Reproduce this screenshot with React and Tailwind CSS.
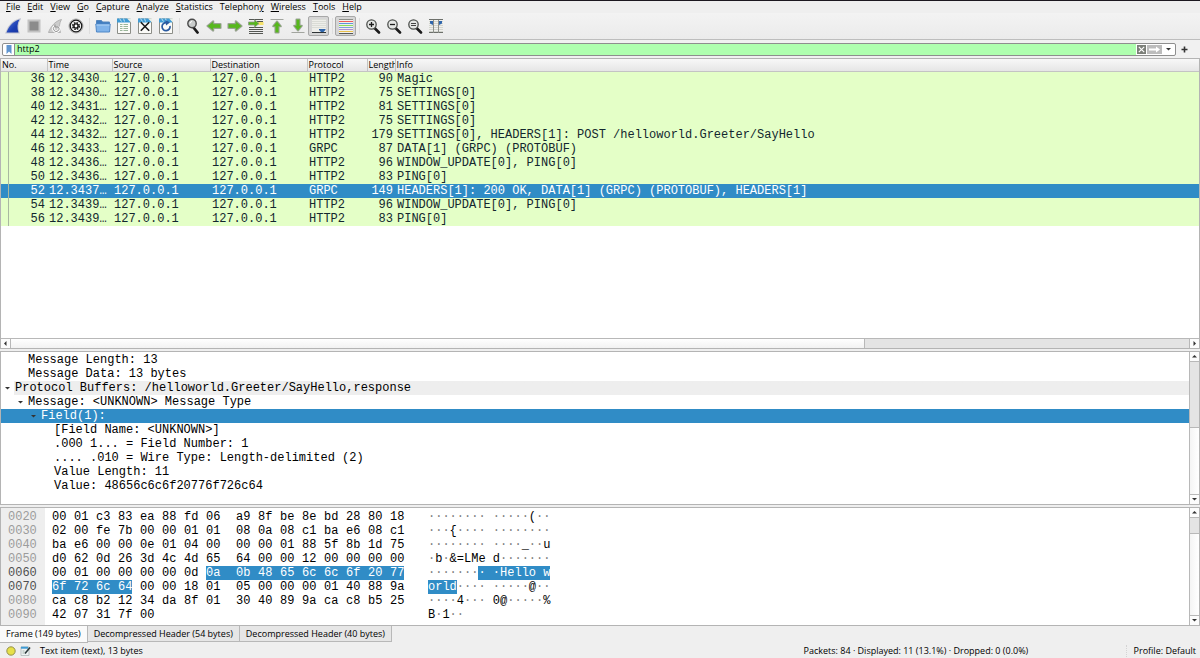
import React, { useState } from 'react';
import clsx from 'clsx';

// menu label split as [before, mnemonic, after]
const MENUS = [
  ['', 'F', 'ile'],
  ['', 'E', 'dit'],
  ['', 'V', 'iew'],
  ['', 'G', 'o'],
  ['', 'C', 'apture'],
  ['', 'A', 'nalyze'],
  ['', 'S', 'tatistics'],
  ['Telephon', 'y', ''],
  ['', 'W', 'ireless'],
  ['', 'T', 'ools'],
  ['', 'H', 'elp'],
];

const PACKETS = [
  [36, '12.3430…', 'HTTP2', 90, 'Magic'],
  [38, '12.3430…', 'HTTP2', 75, 'SETTINGS[0]'],
  [40, '12.3431…', 'HTTP2', 81, 'SETTINGS[0]'],
  [42, '12.3432…', 'HTTP2', 75, 'SETTINGS[0]'],
  [44, '12.3432…', 'HTTP2', 179, 'SETTINGS[0], HEADERS[1]: POST /helloworld.Greeter/SayHello'],
  [46, '12.3433…', 'GRPC', 87, 'DATA[1] (GRPC) (PROTOBUF)'],
  [48, '12.3436…', 'HTTP2', 96, 'WINDOW_UPDATE[0], PING[0]'],
  [50, '12.3436…', 'HTTP2', 83, 'PING[0]'],
  [52, '12.3437…', 'GRPC', 149, 'HEADERS[1]: 200 OK, DATA[1] (GRPC) (PROTOBUF), HEADERS[1]'],
  [54, '12.3439…', 'HTTP2', 96, 'WINDOW_UPDATE[0], PING[0]'],
  [56, '12.3439…', 'HTTP2', 83, 'PING[0]'],
];

const TREE = [
  { pad: 'pl-[14px]', text: 'Message Length: 13' },
  { pad: 'pl-[14px]', text: 'Message Data: 13 bytes' },
  { pad: 'pl-[1px]', text: 'Protocol Buffers: /helloworld.Greeter/SayHello,response', open: true, shaded: true },
  { pad: 'pl-[14px]', text: 'Message: <UNKNOWN> Message Type', open: true },
  { pad: 'pl-[27px]', text: 'Field(1):', open: true, selected: true },
  { pad: 'pl-[40px]', text: '[Field Name: <UNKNOWN>]' },
  { pad: 'pl-[40px]', text: '.000 1... = Field Number: 1' },
  { pad: 'pl-[40px]', text: '.... .010 = Wire Type: Length-delimited (2)' },
  { pad: 'pl-[40px]', text: 'Value Length: 11' },
  { pad: 'pl-[40px]', text: 'Value: 48656c6c6f20776f726c64' },
];

// sel = [first, last] selected byte of the line
const HEX = [
  { off: '0020', bytes: '00 01 c3 83 ea 88 fd 06 a9 8f be 8e bd 28 80 18', ascii: '········ ·····(··' },
  { off: '0030', bytes: '02 00 fe 7b 00 00 01 01 08 0a 08 c1 ba e6 08 c1', ascii: '···{···· ········' },
  { off: '0040', bytes: 'ba e6 00 00 0e 01 04 00 00 00 01 88 5f 8b 1d 75', ascii: '········ ····_··u' },
  { off: '0050', bytes: 'd0 62 0d 26 3d 4c 4d 65 64 00 00 12 00 00 00 00', ascii: '·b·&=LMe d·······' },
  { off: '0060', bytes: '00 01 00 00 00 00 0d 0a 0b 48 65 6c 6c 6f 20 77', ascii: '········ ·Hello w', sel: [7, 15] },
  { off: '0070', bytes: '6f 72 6c 64 00 00 18 01 05 00 00 00 01 40 88 9a', ascii: 'orld···· ·····@··', sel: [0, 3] },
  { off: '0080', bytes: 'ca c8 b2 12 34 da 8f 01 30 40 89 9a ca c8 b5 25', ascii: '····4··· 0@·····%' },
  { off: '0090', bytes: '42 07 31 7f 00', ascii: 'B·1··' },
];

const TABS = ['Frame (149 bytes)', 'Decompressed Header (54 bytes)', 'Decompressed Header (40 bytes)'];

const Svg = ({ children }) => (
  <svg width="17" height="16" viewBox="-1 0 17 16" fill="none" aria-hidden="true">
    {children}
  </svg>
);

const Page = ({ children }) => (
  <>
    <path d="M1.500 1h13v14.500h-13z" fill="#fbfbf8" stroke="#8c8e88" />
    <path d="M1 .5h11l2 2v2H1z" fill="#3f9bd4" />
    <path d="M3.500 .5l2 3M7.500 .5l1 3" stroke="#bfe2f5" />
    <path d="M11 .5h4V4.500z" fill="#e8efe8" />
    {children}
  </>
);

const ARROW = 'M1.500 8l5.700-4.600v2.700h7.300v3.800H7.200v2.700z';

const Arrow = ({ transform }) => (
  <g transform={transform}>
    <path d={ARROW} stroke="#a3a69f" strokeWidth="2.200" strokeLinejoin="round" />
    <path d={ARROW} fill="#57b81c" stroke="#7fa36a" strokeWidth=".5" strokeLinejoin="round" />
  </g>
);

const Lens = ({ children }) => (
  <>
    <path d="M9.500 10l4.500 4.500" stroke="#1b1b1b" strokeWidth="2.600" strokeLinecap="round" />
    <circle cx="6.500" cy="6.500" r="4.700" fill="#e4e6e4" stroke="#4c4f4c" strokeWidth="1.300" />
    {children}
  </>
);

const FIN = 'M1.500 14.500C3.500 9 8 3 14.500 1.500C12 5.500 12 10 13.500 14.500z';

const ICONS = {
  start: (
    <>
      <defs>
        <linearGradient id="fin" x1="0" y1="0" x2="1" y2="1">
          <stop offset="0" stopColor="#5d7ad6" />
          <stop offset=".6" stopColor="#1b3fb4" />
          <stop offset="1" stopColor="#1a36a0" />
        </linearGradient>
      </defs>
      <path d={FIN} fill="url(#fin)" stroke="#c3c6d2" strokeWidth="2" />
      <path d={FIN} fill="url(#fin)" />
    </>
  ),
  stop: <path d="M2.500 2.500h11v11h-11z" fill="#8b8b8b" stroke="#c2c2c2" strokeWidth="2" />,
  restart: (
    <>
      <path d={FIN} fill="#cccccc" stroke="#b3b3b3" />
      <path d="M7.500 8.500a2.800 2.800 0 1 0 4 .5" stroke="#fff" strokeWidth="2.600" />
      <path d="M7.500 8.500a2.800 2.800 0 1 0 4 .5M8 6.500v2.500h3" stroke="#8f8f8f" />
    </>
  ),
  options: (
    <>
      <circle cx="8" cy="8" r="7" fill="#f7f7f7" stroke="#a7a7a7" />
      <circle cx="8" cy="8" r="5.800" stroke="#161616" strokeWidth="1.300" />
      <circle cx="8" cy="8" r="3.300" stroke="#222" strokeWidth="1.600" strokeDasharray="1.600 1" />
      <circle cx="8" cy="8" r="2.100" stroke="#111" strokeWidth="1.400" />
      <circle cx="8" cy="8" r="1.100" fill="#fff" />
    </>
  ),
  open: (
    <>
      <path d="M1.500 2.500h5l1 1.500h7v4h-13z" fill="#3f7cc0" stroke="#5586bd" />
      <path d="M.8 6h14.400l-.7 8H1.500z" fill="#7fb3ea" stroke="#4f87c7" />
      <path d="M1.500 7h13" stroke="#b3d5f6" />
    </>
  ),
  save: (
    <Page>
      <path d="M4 6.500h2.500m1 0h4.500M4 8.500h2.500m1 0h4.500M4 10.500h2.500m1 0h4.500M4 12.500h2.500m1 0h4.500" stroke="#9ab79a" />
    </Page>
  ),
  close: (
    <Page>
      <path d="M3.800 4.200l8.400 8.600M12.200 4.200l-8.400 8.600" stroke="#1a1a1a" strokeWidth="1.600" />
    </Page>
  ),
  reload: (
    <Page>
      <path d="M12 8a4 4 0 1 1-3.500-3.300" stroke="#2a5aa0" strokeWidth="1.700" />
      <path d="M7.500 2l4.500 2.500-4 3z" fill="#2a5aa0" />
    </Page>
  ),
  find: (
    <>
      <path d="M8.500 9.500l4 5" stroke="#1b1b1b" strokeWidth="2.800" strokeLinecap="round" />
      <circle cx="7" cy="5.500" r="4.200" fill="#c9cccb" stroke="#4a4a4a" strokeWidth="1.400" />
      <path d="M5 5.500a2 2 0 0 1 2-2" stroke="#fff" />
    </>
  ),
  back: <Arrow />,
  forward: <Arrow transform="rotate(180 8 8)" />,
  goto: (
    <>
      <path d="M1 1.500h14M9 3.500h6M1 9.500h14M1 11.500h14M1 13.500h14M1 15.500h14" stroke="#555753" />
      <path d="M10 4h5.500v3H10z" fill="#f7e36b" />
      <path d="M11 5.500L6.500 1.700v2.300H.5v3h6v2.300z" fill="#57b81c" stroke="#8f9a8b" strokeWidth=".8" />
    </>
  ),
  first: (
    <>
      <path d="M1.500 1.500h13" stroke="#a2a59f" />
      <Arrow transform="translate(8 9) rotate(90) scale(.86) translate(-8 -8)" />
    </>
  ),
  last: (
    <>
      <path d="M1.500 14.500h13" stroke="#a2a59f" />
      <Arrow transform="translate(8 7) rotate(-90) scale(.86) translate(-8 -8)" />
    </>
  ),
  autoscroll: (
    <>
      <path d="M1 1h14v14H1z" fill="#eeeeea" />
      <path d="M1 1.500h14M1 3.500h14M1 5.500h14M1 7.500h14M1 9.500h14" stroke="#dadcd6" />
      <path d="M1 14.500h14" stroke="#2e3436" />
      <path d="M8 11h6.500v1l-2 2h-2.500l-2-2z" fill="#2f66ac" />
    </>
  ),
  colorize: (
    <>
      <path d="M1 1h14v14H1z" fill="#f0f0ec" />
      <path d="M1 1.500h14" stroke="#8d8f8a" />
      <path d="M1 3.500h14" stroke="#ee5c5c" />
      <path d="M1 5.500h14" stroke="#5f93dc" />
      <path d="M1 7.500h14" stroke="#88dc5c" />
      <path d="M1 9.500h14" stroke="#7f9fdc" />
      <path d="M1 11.500h14" stroke="#b08fd0" />
      <path d="M1 13.500h14" stroke="#e9c04c" />
      <path d="M1 15.500h14" stroke="#55585a" />
    </>
  ),
  zoomIn: (
    <Lens>
      <path d="M4 6.500h5M6.500 4v5" stroke="#1b1b1b" strokeWidth="1.300" />
    </Lens>
  ),
  zoomOut: (
    <Lens>
      <path d="M4 6.500h5" stroke="#1b1b1b" strokeWidth="1.300" />
    </Lens>
  ),
  zoomReset: (
    <Lens>
      <path d="M4 5.500h5M4 7.500h5" stroke="#444" />
    </Lens>
  ),
  resize: (
    <>
      <path d="M1 1.500h14v13H1z" fill="#f0f0ed" />
      <path d="M1 3.500h14M1 5.500h14M1 7.500h14M1 9.500h14M1 11.500h14M1 13.500h14" stroke="#d3d5cf" />
      <path d="M1 1.500h14M1 14.500h14" stroke="#6d706b" />
      <path d="M5.500 2v13M10.500 2v13" stroke="#8d908b" />
      <path d="M2 3h3v4l-3-1.500zM14 3h-3v4l3-1.500z" fill="#2f66ac" />
    </>
  ),
};

const TOOLBAR = [
  [['start', 'Start capture'], ['stop', 'Stop capture'], ['restart', 'Restart capture'], ['options', 'Capture options']],
  [['open', 'Open'], ['save', 'Save'], ['close', 'Close'], ['reload', 'Reload']],
  [
    ['find', 'Find packet'],
    ['back', 'Go back'],
    ['forward', 'Go forward'],
    ['goto', 'Go to packet'],
    ['first', 'First packet'],
    ['last', 'Last packet'],
    ['autoscroll', 'Auto scroll', true],
  ],
  [['colorize', 'Colorize', true]],
  [['zoomIn', 'Zoom in'], ['zoomOut', 'Zoom out'], ['zoomReset', 'Normal size'], ['resize', 'Resize columns']],
];

const ARROWS = {
  up: 'M1 4.500h5L3.500 2z',
  down: 'M1 2h5L3.500 4.500z',
  left: 'M4.500 1v5L2 3.500z',
  right: 'M2.500 1v5L5 3.500z',
};

const ScrollButton = ({ dir }) => (
  <button
    type="button"
    aria-label={`Scroll ${dir}`}
    className="w-[9px] h-[9px] shrink-0 flex items-center justify-center bg-[#fcfcfc]"
  >
    <svg width="7" height="7" viewBox="0 0 7 7">
      <path d={ARROWS[dir]} fill="#333" />
    </svg>
  </button>
);

// groove is the part already scrolled past, the thumb fills the rest
const VScroll = ({ groove }) => (
  <div className="w-[9px] box-content shrink-0 flex flex-col border-l border-[#b8b8b8] bg-[#e4e4e4]">
    <ScrollButton dir="up" />
    <div className={clsx('border-t border-[#b8b8b8]', groove)}></div>
    <div className="grow-[68] basis-0 border-y border-[#b8b8b8] bg-gradient-to-r from-[#f4f4f4] to-white"></div>
    <ScrollButton dir="down" />
  </div>
);

const Caret = () => (
  <svg className="w-[13px] shrink-0" height="6" viewBox="0 0 13 6" aria-hidden="true">
    <path d="M3 2h5L5.500 4.500z" fill="#333" />
  </svg>
);

const inRange = (sel, i) => !!sel && i >= sel[0] && i <= sel[1];

const Ascii = ({ text, sel }) =>
  text.split('').map((ch, i) => {
    // the gap after the eighth character is not a byte
    const byte = i > 8 ? i - 1 : i;
    const on = i === 8 ? inRange(sel, 7) && inRange(sel, 8) : inRange(sel, byte);
    return (
      <span key={i} className={clsx(on ? 'bg-[#308cc6] text-white' : ch === '·' && 'text-[#808080]')}>
        {ch}
      </span>
    );
  });

const Bytes = ({ bytes, sel }) => (
  <div className="flex">
    {bytes.split(' ').map((b, i) => {
      const on = inRange(sel, i);
      const joined = on && inRange(sel, i + 1);
      return (
        <span key={i} className={clsx(i === 7 ? 'w-[30px]' : 'w-[22px]', joined && 'bg-[#308cc6]')}>
          <span className={clsx('inline-block', on && 'bg-[#308cc6] text-white')}>{b}</span>
        </span>
      );
    })}
  </div>
);

const App = () => {
  const [filter, setFilter] = useState('http2');
  const [selected, setSelected] = useState(52);
  const [tab, setTab] = useState(0);

  return (
    <div className="h-screen w-full flex flex-col overflow-hidden bg-[#efefef] text-black font-['Open_Sans',sans-serif] text-[9px] leading-[12px]">
      {/* Menu bar */}
      <nav className="flex items-center gap-[7px] h-[13px] pl-[6px] border-t border-[#1c1820] shrink-0">
        {MENUS.map(([pre, key, post]) => (
          <button key={pre + key + post} type="button">
            {pre}
            <span className="underline">{key}</span>
            {post}
          </button>
        ))}
      </nav>

      {/* Toolbar */}
      <div className="flex items-center h-[26px] pl-[2px] bg-gradient-to-b from-[#f3f3f3] to-[#ebebeb] shrink-0">
        {TOOLBAR.map((group, g) => (
          <React.Fragment key={g}>
            {g > 0 && <span className="w-[6px] h-4 flex justify-center"><span className="w-px bg-[#dedede]"></span></span>}
            {group.map(([icon, label, pressed]) => (
              <button
                key={icon}
                type="button"
                title={label}
                aria-label={label}
                className={clsx(
                  'w-[21px] h-[20px] flex items-center justify-center rounded-[2px]',
                  pressed && 'bg-[#d6d6d6] border border-[#a8a8a8]'
                )}
              >
                <Svg>{ICONS[icon]}</Svg>
              </button>
            ))}
          </React.Fragment>
        ))}
      </div>

      {/* Display filter */}
      <div className="flex items-center h-[19px] pl-[2px] pr-[10px] border-t border-[#bdbdbd] bg-[#f1f1f1] shrink-0">
        <div className="flex flex-1 h-[13px] items-stretch border border-[#8e8e8e] rounded-[2px] bg-white overflow-hidden">
          <button type="button" aria-label="Filter bookmarks" className="w-[12px] flex items-center justify-center border-r border-[#8e8e8e]">
            <svg width="6" height="9" viewBox="0 0 6 9">
              <path d="M.5 0h5v9L3 6.500.5 9z" fill="#5f94cf" />
            </svg>
          </button>
          <input
            type="text"
            aria-label="Display filter"
            value={filter}
            onChange={(e) => setFilter(e.target.value)}
            className="flex-1 min-w-0 bg-[#afffaf] pl-[2px] outline-none"
          />
          <button type="button" aria-label="Clear filter" className="w-[10px] flex items-center justify-center" onClick={() => setFilter('')}>
            <svg width="9" height="9" viewBox="0 0 9 9">
              <path d="M0 0h9v9H0z" fill="#7c7f79" />
              <path d="M1.800 1.800l5.400 5.400M7.200 1.800L1.800 7.200" stroke="#fff" strokeWidth="1.100" />
            </svg>
          </button>
          <button type="button" aria-label="Apply filter" className="w-[17px] flex items-center justify-center">
            <svg width="15" height="9" viewBox="0 0 15 9">
              <path d="M0 0h15v9H0z" fill="#bcbcbc" />
              <path d="M2 3.500h7V1.500l4 3-4 3v-2H2z" fill="#fff" />
            </svg>
          </button>
          <button type="button" aria-label="Recent filters" className="w-[12px] flex items-center justify-center">
            <Caret />
          </button>
        </div>
        <button type="button" aria-label="Add filter button" className="w-[12px] ml-[2px] flex items-center justify-center">
          <svg width="7" height="7" viewBox="0 0 7 7">
            <path d="M3.500 .5v6M.5 3.500h6" stroke="#333" strokeWidth="1.600" />
          </svg>
        </button>
      </div>

      {/* Packet list */}
      <div className="flex flex-col grow-[292] basis-0 min-h-0 bg-white border border-[#b4b4b4]">
        <div className="flex-1 min-h-0 overflow-hidden">
          <table className="w-full table-fixed border-collapse">
            <colgroup>
              <col className="w-[46px]" />
              <col className="w-[65px]" />
              <col className="w-[98px]" />
              <col className="w-[97px]" />
              <col className="w-[60px]" />
              <col className="w-[28px]" />
              <col />
            </colgroup>
            <thead>
              <tr className="h-[12px] leading-[11px] bg-gradient-to-b from-[#f8f8f8] to-[#e6e6e6]">
                {['No.', 'Time', 'Source', 'Destination', 'Protocol', 'Length', 'Info'].map((h) => (
                  <th
                    key={h}
                    className="p-0 pl-px border-r border-b border-[#c4c4c4] last:border-r-0 text-left font-normal whitespace-nowrap overflow-hidden"
                  >
                    {h}
                  </th>
                ))}
              </tr>
            </thead>
            <tbody className="font-['Liberation_Mono',monospace] text-[12px] leading-[14px] whitespace-nowrap">
              {PACKETS.map(([no, time, proto, len, info]) => (
                <tr
                  key={no}
                  onClick={() => setSelected(no)}
                  className={no === selected ? 'bg-[#308cc6] text-white' : 'bg-[#e4ffc7] text-[#12272e]'}
                >
                  <td className="p-0 pr-[2px] text-right">
                    <span className="flex justify-between">
                      <span className="ml-[7px] w-px bg-[#a9b8a0]"></span>
                      {no}
                    </span>
                  </td>
                  <td className="p-0 pl-[2px]">{time}</td>
                  <td className="p-0 pl-[2px]">127.0.0.1</td>
                  <td className="p-0 pl-[2px]">127.0.0.1</td>
                  <td className="p-0 pl-[2px]">{proto}</td>
                  <td className="p-0 pr-[2px] text-right">{len}</td>
                  <td className="p-0 pl-[2px]">{info}</td>
                </tr>
              ))}
            </tbody>
          </table>
        </div>
        <div className="flex h-[10px] border-t border-[#b8b8b8] bg-[#e4e4e4] shrink-0">
          <ScrollButton dir="left" />
          <div className="grow-[856] basis-0 border-x border-[#b8b8b8] bg-gradient-to-b from-white to-[#f2f2f2]"></div>
          <div className="grow-[325] basis-0 border-r border-[#b8b8b8]"></div>
          <ScrollButton dir="right" />
        </div>
      </div>

      <div className="h-[2px] shrink-0"></div>

      {/* Packet details */}
      <div className="flex grow-[154] basis-0 min-h-0 bg-white border border-[#b4b4b4]">
        <ul className="flex-1 min-w-0 overflow-hidden pt-px font-['Liberation_Mono',monospace] text-[12px] leading-[14px] whitespace-pre">
          {TREE.map(({ pad, text, open, shaded, selected: on }) => (
            <li
              key={text}
              className={clsx(
                'flex items-center',
                pad,
                on && 'bg-[#308cc6] text-white',
                shaded && 'bg-gradient-to-r from-white from-[13px] to-[#eeeeee] to-[13px]'
              )}
            >
              {open ? <Caret /> : <span className="w-[13px] shrink-0"></span>}
              {text}
            </li>
          ))}
        </ul>
        <VScroll groove="grow-[67] basis-0" />
      </div>

      <div className="h-[2px] shrink-0"></div>

      {/* Packet bytes */}
      <div className="flex grow-[118] basis-0 min-h-0 bg-white border border-[#b4b4b4]">
        <div className="flex-1 min-w-0 overflow-hidden pt-[2px] bg-gradient-to-r from-[#eeeeee] from-[44px] to-white to-[44px]">
          <table className="border-collapse font-['Liberation_Mono',monospace] text-[12px] leading-[14px] whitespace-pre">
            <tbody>
              {HEX.map(({ off, bytes, ascii, sel }) => (
                <tr key={off}>
                  <th scope="row" className={clsx('p-0 pl-[7px] w-[51px] text-left font-normal', sel ? 'text-[#505050]' : 'text-[#9c9c9c]')}>
                    {off}
                  </th>
                  <td className="p-0 w-[376px]"><Bytes bytes={bytes} sel={sel} /></td>
                  <td className="p-0"><Ascii text={ascii} sel={sel} /></td>
                </tr>
              ))}
            </tbody>
          </table>
        </div>
        <VScroll groove="h-[16px]" />
      </div>

      {/* Byte view tabs */}
      <div className="flex items-start h-[17px] shrink-0" role="tablist">
        {TABS.map((t, i) => (
          <button
            key={t}
            type="button"
            role="tab"
            aria-selected={i === tab}
            onClick={() => setTab(i)}
            className={clsx(
              'px-[6px] border-r border-b border-[#b8b8b8]',
              i === tab ? 'h-[17px] bg-[#fafafa]' : 'h-[16px] bg-[#e6e6e6]'
            )}
          >
            {t}
          </button>
        ))}
      </div>

      {/* Status bar */}
      <footer className="flex items-center h-[15px] pl-[6px] pr-[4px] shrink-0">
        <button type="button" aria-label="Expert information" className="w-[10px] mr-[4px]">
          <svg width="10" height="10" viewBox="0 0 10 10">
            <circle cx="5" cy="5" r="4.200" fill="#e6e04a" stroke="#8b8747" strokeWidth=".9" />
          </svg>
        </button>
        <button type="button" aria-label="Capture comments" className="w-[12px] mr-[8px]">
          <svg width="12" height="10" viewBox="0 0 12 10">
            <path d="M1 1h8v8.500H1z" fill="#eef3f3" stroke="#a5b0b0" strokeWidth=".7" />
            <path d="M1 .7h7v2H1z" fill="#3f9bd4" />
            <path d="M10 1.500L5 7.500" stroke="#2b3a3c" strokeWidth="1.600" />
            <path d="M2.500 5h2M2.500 7h2" stroke="#8fa59a" strokeWidth=".8" />
          </svg>
        </button>
        <span className="flex-1">Text item (text), 13 bytes</span>
        <span className="w-[322px]">Packets: 84 · Displayed: 11 (13.1%) · Dropped: 0 (0.0%)</span>
        <span className="pl-[7px] whitespace-nowrap border-l border-dotted border-[#d4d4d4]">Profile: Default</span>
      </footer>
    </div>
  );
};

export default App;
